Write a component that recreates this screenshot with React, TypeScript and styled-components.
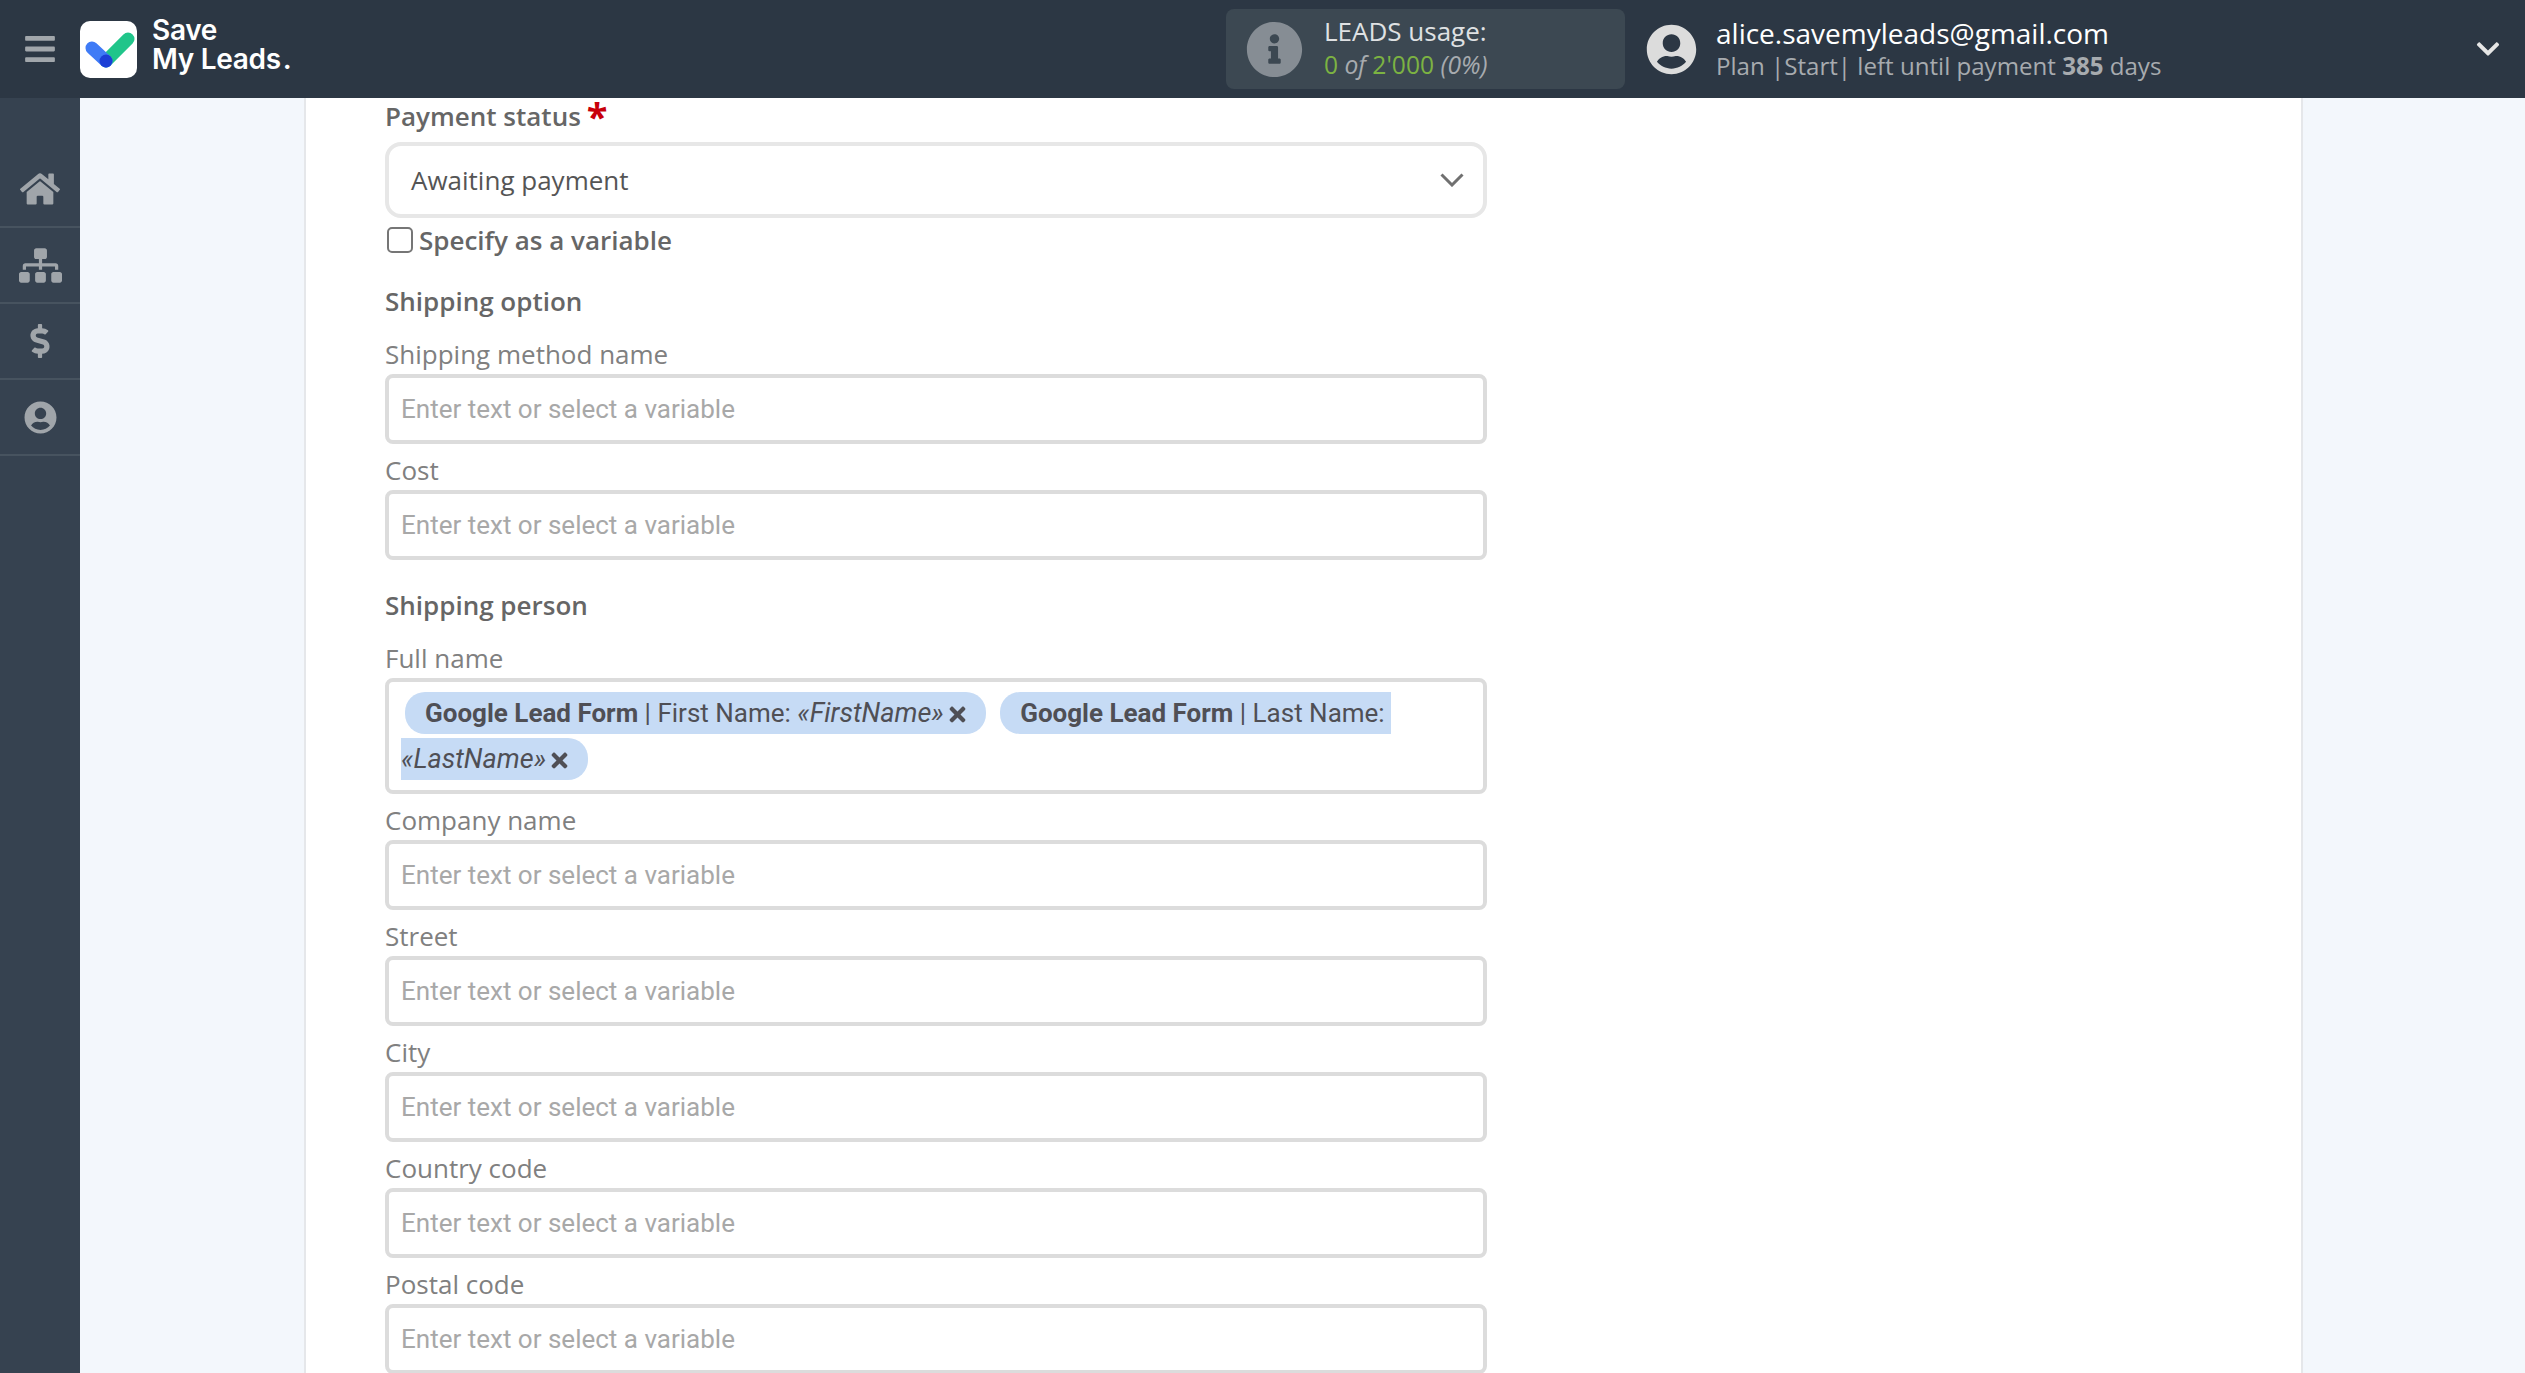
import * as React from 'react';
import styled, { createGlobalStyle } from 'styled-components';
import { FaBars, FaChevronDown, FaDollarSign, FaHome, FaInfoCircle, FaSitemap, FaTimes, FaUserCircle } from 'react-icons/fa';

const GlobalStyle = createGlobalStyle`
  html, body {
    margin: 0;
    padding: 0;
    height: 100%;
    overflow: hidden;
    background: #f3f7fc;
    font-family: "Open Sans", "Liberation Sans", sans-serif;
  }
  * { box-sizing: border-box; }
`;

const Page = styled.div`
  height: 1373px;
  display: flex;
  flex-direction: column;
  overflow: hidden;
`;

const Header = styled.header`
  height: 98px;
  flex: none;
  display: flex;
  align-items: center;
  background: #2c3744;
`;

const MenuButton = styled.div`
  width: 80px;
  display: flex;
  justify-content: center;
  color: #a1a6ab;
  font-size: 34px;
`;

const LogoMark = styled.div`
  width: 57px;
  height: 57px;
  flex: none;
  border-radius: 10px;
  background: #fff;
`;

const LogoText = styled.div`
  width: 1074px;
  margin-left: 15px;
  margin-bottom: 8px;
  flex: none;
  color: #fff;
  font-family: Inter, "Open Sans", sans-serif;
  font-weight: 600;
  font-size: 28px;
  line-height: 29px;
  letter-spacing: -0.3px;
`;

const LogoDot = styled.span`
  margin-left: 2px;
`;

const LeadsBox = styled.div`
  width: 399px;
  height: 80px;
  flex: none;
  display: flex;
  align-items: center;
  padding-left: 20px;
  border-radius: 8px;
  background: #3c4852;
  color: #868d94;
  font-size: 57px;
`;

const LeadsText = styled.div`
  margin-left: 21px;
  margin-bottom: 3px;
  font-size: 26px;
  line-height: 33px;
  color: #dfe1e3;
`;

const LeadsCount = styled.div`
  font-size: 24.6px;
  color: #a7abaf;
  font-style: italic;
`;

const Green = styled.span`
  font-style: normal;
  color: #7cb342;
`;

const UserBlock = styled.div`
  margin-left: 21px;
  flex: 1;
  display: flex;
  align-items: center;
  color: #dcdcdc;
  font-size: 51px;
`;

const UserText = styled.div`
  margin-left: 19px;
  margin-bottom: 3px;
`;

const UserEmail = styled.div`
  color: #fff;
  font-size: 28px;
  line-height: 36px;
`;

const UserPlan = styled.div`
  color: #a7abaf;
  font-size: 24.1px;
  line-height: 29px;
`;

const HeaderChevron = styled.div`
  margin-right: 24px;
  color: #e6e6e6;
  font-size: 26px;
  display: flex;
`;

const Body = styled.div`
  flex: 1;
  display: flex;
  min-height: 0;
`;

const Sidebar = styled.nav`
  width: 80px;
  flex: none;
  padding-top: 54px;
  background: #364250;
`;

const SideItem = styled.div`
  height: 76px;
  display: flex;
  align-items: center;
  justify-content: center;
  border-bottom: 2px solid #47535f;
  color: #a0a5aa;
`;

const Main = styled.main`
  flex: 1;
  padding-left: 224px;
  padding-right: 222px;
  background: #f3f7fc;
`;

const Panel = styled.section`
  height: 100%;
  padding-left: 79px;
  border-left: 2px solid #e5e7ea;
  border-right: 2px solid #e5e7ea;
  background: #fff;
`;

const Form = styled.div`
  width: 1102px;
`;

const StatusLabel = styled.div`
  height: 36px;
  margin-bottom: 8px;
  color: #666;
  font-weight: 600;
  font-size: 26px;
  line-height: 36px;
`;

const Required = styled.span`
  position: relative;
  top: 5px;
  margin-left: 6px;
  color: #c8000a;
  font-size: 38px;
  font-weight: 700;
  line-height: 0;
`;

const SelectBox = styled.div`
  height: 76px;
  display: flex;
  align-items: center;
  justify-content: space-between;
  padding: 0 19px 0 22px;
  border: 4px solid #e7e7e7;
  border-radius: 16px;
  color: #555;
  font-size: 26px;
`;

const CheckRow = styled.label`
  margin-top: 4px;
  height: 36px;
  display: flex;
  align-items: center;
  gap: 6px;
  padding-left: 2px;
  color: #666;
  font-weight: 600;
  font-size: 26px;
`;

const CheckBox = styled.input.attrs({ type: 'checkbox' })`
  appearance: none;
  width: 26px;
  height: 26px;
  margin: 0;
  border: 2.5px solid #767676;
  border-radius: 5px;
  background: #fff;
`;

const Section = styled.div<{ $top: number }>`
  height: 36px;
  margin-top: ${props => props.$top}px;
  color: #666;
  font-weight: 600;
  font-size: 26px;
  line-height: 36px;
`;

const FieldLabel = styled.div<{ $top: number }>`
  height: 36px;
  margin-top: ${props => props.$top}px;
  margin-bottom: 2px;
  color: #808080;
  font-size: 26px;
  line-height: 36px;
`;

const TextInput = styled.input`
  display: block;
  width: 100%;
  height: 70px;
  padding: 0 12px;
  border: 4px solid #dcdcdc;
  border-radius: 8px;
  outline: none;
  font-family: Roboto, sans-serif;
  font-size: 26px;

  &::placeholder {
    color: #a8a8a8;
    opacity: 1;
  }
`;

const TagBox = styled.div`
  height: 116px;
  padding: 8px 12px 0;
  border: 4px solid #dcdcdc;
  border-radius: 8px;
  color: #4f4f55;
  font-family: Roboto, sans-serif;
  font-size: 26px;
  line-height: 46px;
`;

const Tag = styled.span`
  margin: 0 4px;
  padding: 6px 17px 6px 20px;
  border-radius: 20px;
  background: #c6dbf5;
  white-space: pre-wrap;
`;

const TagName = styled.i`
  font-size: 27px;
`;

const TagClose = styled.span`
  margin-left: 2px;

  svg {
    vertical-align: -4px;
    font-size: 23px;
  }
`;

const fields = ['Company name', 'Street', 'City', 'Country code', 'Postal code'];

const PLACEHOLDER = 'Enter text or select a variable';

function Logo() {
  return (
    <LogoMark>
      <svg width="57" height="57" viewBox="0 0 57 57">
        <path d="M26 40L48 18" stroke="#20c58a" strokeWidth="13" strokeLinecap="round" />
        <path d="M12 27L26 40" stroke="#3f7bf6" strokeWidth="13" strokeLinecap="round" />
        <circle cx="26" cy="40" r="6.5" fill="#1c3fd6" />
      </svg>
    </LogoMark>
  );
}

function Chevron() {
  return (
    <svg width="24" height="14" viewBox="0 0 24 14" fill="none">
      <path d="M1.5 1.5L12 12L22.5 1.5" stroke="#707070" strokeWidth="3" />
    </svg>
  );
}

export default function App() {
  return (
    <Page>
      <GlobalStyle />
      <Header>
        <MenuButton><FaBars /></MenuButton>
        <Logo />
        <LogoText>Save<br />My Leads<LogoDot>.</LogoDot></LogoText>
        <LeadsBox>
          <FaInfoCircle />
          <LeadsText>
            LEADS usage:
            <LeadsCount><Green>0</Green> of <Green>2'000</Green> (0%)</LeadsCount>
          </LeadsText>
        </LeadsBox>
        <UserBlock>
          <FaUserCircle />
          <UserText>
            <UserEmail>alice.savemyleads@gmail.com</UserEmail>
            <UserPlan>Plan |Start| left until payment <b>385</b> days</UserPlan>
          </UserText>
        </UserBlock>
        <HeaderChevron><FaChevronDown /></HeaderChevron>
      </Header>
      <Body>
        <Sidebar>
          <SideItem><FaHome size={40} /></SideItem>
          <SideItem><FaSitemap size={43} /></SideItem>
          <SideItem><FaDollarSign size={34} /></SideItem>
          <SideItem><FaUserCircle size={33} /></SideItem>
        </Sidebar>
        <Main>
          <Panel>
            <Form>
              <StatusLabel>Payment status<Required>*</Required></StatusLabel>
              <SelectBox>Awaiting payment<Chevron /></SelectBox>
              <CheckRow><CheckBox />Specify as a variable</CheckRow>
              <Section $top={25}>Shipping option</Section>
              <FieldLabel $top={17}>Shipping method name</FieldLabel>
              <TextInput placeholder={PLACEHOLDER} />
              <FieldLabel $top={8}>Cost</FieldLabel>
              <TextInput placeholder={PLACEHOLDER} />
              <Section $top={27}>Shipping person</Section>
              <FieldLabel $top={17}>Full name</FieldLabel>
              <TagBox>
                <Tag><b>Google Lead Form</b> | First Name: <TagName>«FirstName»</TagName><TagClose><FaTimes /></TagClose></Tag>{' '}
                <Tag><b>Google Lead Form</b> | Last Name: <TagName>«LastName»</TagName><TagClose><FaTimes /></TagClose></Tag>
              </TagBox>
              {fields.map(name => (
                <React.Fragment key={name}>
                  <FieldLabel $top={8}>{name}</FieldLabel>
                  <TextInput placeholder={PLACEHOLDER} />
                </React.Fragment>
              ))}
            </Form>
          </Panel>
        </Main>
      </Body>
    </Page>
  );
}
